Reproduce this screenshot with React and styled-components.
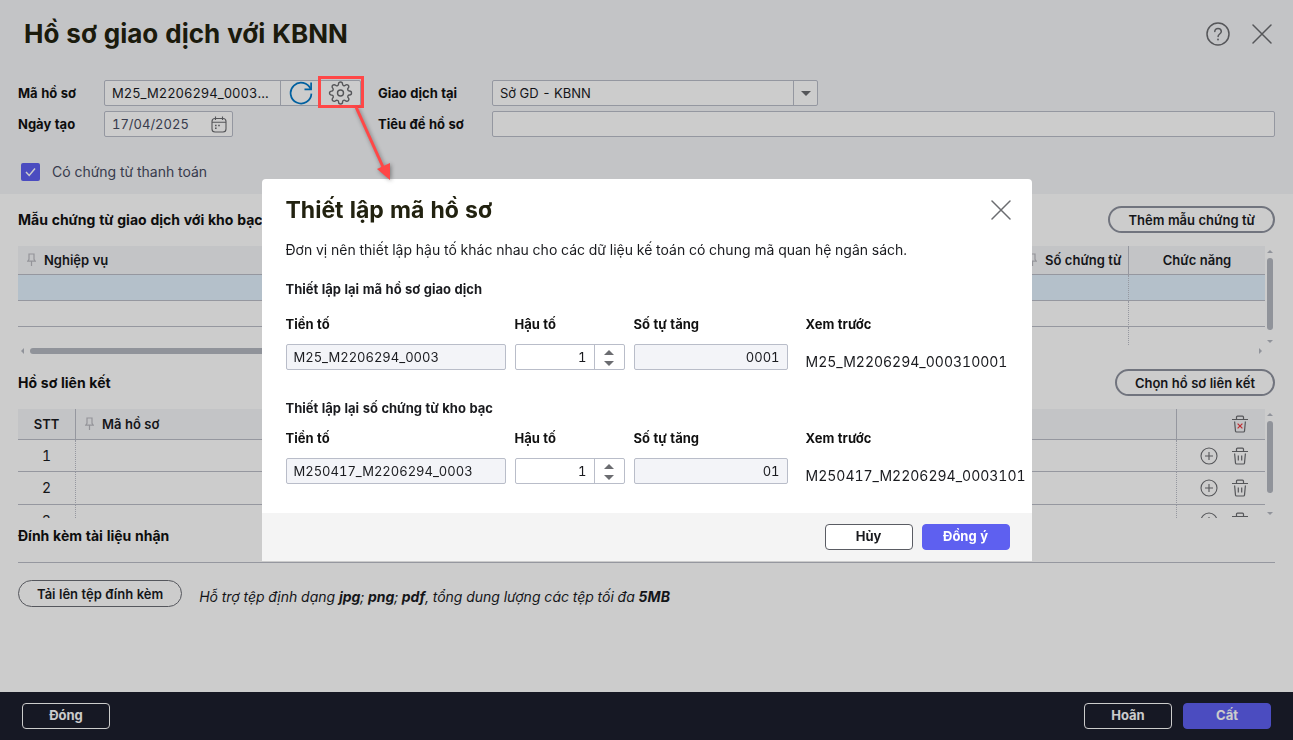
import React from 'react'
import styled, { createGlobalStyle, css } from 'styled-components'
import { FiSettings } from 'react-icons/fi'

// theme-----------------------------------

const colors = {
  primary: '#5e60f0',
  text: '#1a1b1f',
  muted: '#474b61',
  border: '#b9bdc9',
  line: '#bbbdc7',
  panel: '#f4f5f8',
  selected: '#e1f1fd',
  thumb: '#b5b8c1',
  icon: '#6b6c70',
  footer: '#1c1e2d',
  callout: '#ff4747'
}

const GlobalStyle = createGlobalStyle`
  * {
    box-sizing: border-box;
  }

  body {
    margin: 0;
    color: ${colors.text};
    font-family: Inter, "Liberation Sans", sans-serif;
    font-size: 14px;
    line-height: 20px;
    font-variant-numeric: tabular-nums;
  }

  button, input, select {
    margin: 0;
    color: inherit;
    font: inherit;
    font-size: 13px;
    font-variant-numeric: tabular-nums;
  }

  h1, h2, h3, p {
    margin: 0;
  }
`

// icons-----------------------------------

const CloseIcon = () => <svg width='20' height='20' viewBox='0 0 20 20' fill='none' stroke='currentColor' strokeWidth='1.5' strokeLinecap='round'>
  <path d='M1 1l18 18M19 1L1 19' />
</svg>

const HelpIcon = () => <svg width='24' height='24' viewBox='0 0 24 24' fill='none' stroke='currentColor' strokeWidth='1.5' strokeLinecap='round'>
  <circle cx='12' cy='12' r='11' />
  <path d='M8.8 9.6C8.8 7.6 10.2 6.4 12 6.4s3.3 1.2 3.3 3.1c0 2.6-3.2 2.4-3.2 4.9' />
  <path d='M12 17.4v.1' strokeWidth='1.8' />
</svg>

const RefreshIcon = () => <svg width='24' height='24' viewBox='0 0 24 24' fill='none' stroke='#0078c8' strokeWidth='1.7'>
  <path d='M21.7 8.3A10.4 10.4 0 1 0 22.4 12.6' />
  <path d='M22.1 1.6v6.8h-6.6' />
</svg>

const CalendarIcon = () => <svg width='16' height='17' viewBox='0 0 16 17' fill='none' stroke='currentColor' strokeWidth='1.1'>
  <rect x='1' y='2.5' width='14' height='13.5' rx='3' />
  <path d='M1 6.2h14M4.5 .5v3.5M11.5 .5v3.5' />
  <path d='M4 9.5h1.6M7.2 9.5h1.6M4 12.3h1.6' strokeWidth='1.4' />
</svg>

const CheckIcon = () => <svg width='19' height='18' viewBox='0 0 19 18' fill='none' stroke='#fff' strokeWidth='1.5'>
  <path d='M5 9l3.2 3.4L14 5.6' />
</svg>

const PinIcon = () => <svg width='9' height='14' viewBox='0 0 9 14' fill='none' stroke='#b9bac0' strokeWidth='1.2'>
  <path d='M2 1h5v5.4l1.2 1.8H.8L2 6.4zM4.5 8.2V13' />
</svg>

const PlusIcon = () => <svg width='18' height='18' viewBox='0 0 18 18' fill='none' stroke='currentColor' strokeWidth='1.1'>
  <circle cx='9' cy='9' r='8' />
  <path d='M9 5v8M5 9h8' />
</svg>

const TrashIcon = ({ crossed }) => <svg width='16' height='18' viewBox='0 0 16 18' fill='none' stroke='currentColor' strokeWidth='1.2'>
  <path d='M0 4.5h16M4.5 4.5V2.2c0-.6.4-1 1-1h5c.6 0 1 .4 1 1v2.3M2.6 6.5l.9 9.6c.1.6.4.9 1 .9h7c.6 0 .9-.3 1-.9l.9-9.6' />
  {crossed
    ? <path d='M5.6 8.6l4.8 4.8M10.4 8.6l-4.8 4.8' stroke='#f0393f' />
    : <path d='M6.3 8.5v5M9.7 8.5v5' />}
</svg>

// styled----------------------------------

const Page = styled.div`
  display: flex;
  flex-direction: column;
  min-height: 100vh;
  background: #fff;
`

const TopPanel = styled.header`
  padding-bottom: 12px;
  background: ${colors.panel};
`

const TitleBar = styled.div`
  display: flex;
  align-items: center;
  justify-content: space-between;
  height: 68px;
  padding: 0 21px 0 24px;
`

const PageTitle = styled.h1`
  color: #222210;
  font-size: 26px;
  font-weight: 700;
  line-height: 32px;
`

const TitleActions = styled.div`
  display: flex;
  align-items: center;
  gap: 22px;
`

const IconButton = styled.button`
  display: flex;
  align-items: center;
  justify-content: center;
  padding: ${p => p.$pad || 0}px;
  border: 0;
  background: none;
  color: ${colors.icon};
  cursor: pointer;
`

const FormGrid = styled.div`
  display: grid;
  grid-template-columns: 86px 274px 114px 1fr;
  row-gap: 5px;
  align-items: center;
  padding: 12px 18px 0;
`

const Label = styled.label`
  color: #111;
  font-size: 13px;
  font-weight: 700;
`

const boxStyle = css`
  height: 26px;
  border: 1px solid ${colors.border};
  border-radius: 2px;
  background: #fff;
`

const Group = styled.div`
  ${boxStyle}
  display: flex;
  align-items: stretch;
  width: ${p => p.$width ? `${p.$width}px` : 'auto'};
`

const GroupInput = styled.input`
  flex: 1;
  min-width: 0;
  padding: 0 7px;
  border: 0;
  background: none;
  color: ${p => p.$muted ? colors.muted : 'inherit'};
  text-align: ${p => p.$right ? 'right' : 'left'};
  text-overflow: ellipsis;
`

const GroupButton = styled.button`
  display: flex;
  flex-direction: column;
  align-items: center;
  justify-content: center;
  width: 40px;
  padding: 0;
  border: 0;
  border-left: ${p => p.$divided ? `1px solid ${colors.border}` : 0};
  background: none;
  color: ${colors.icon};
`

const GearAnchor = styled.div`
  position: relative;
  display: flex;

  svg {
    stroke-width: 1.4px;
  }
`

const Callout = styled.div`
  position: absolute;
  z-index: 2;
  top: -5px;
  left: -2px;
  width: 46px;
  height: 32px;
  border: 3px solid ${colors.callout};
  pointer-events: none;
`

const CalloutArrow = styled.svg`
  position: absolute;
  top: 28px;
  left: 30px;
  filter: drop-shadow(1px 1px 2px rgba(0, 0, 0, 0.4));
`

const TextInput = styled.input`
  ${boxStyle}
  width: 100%;
  padding: 0 7px;
  text-align: ${p => p.$right ? 'right' : 'left'};

  &:read-only {
    background: #f3f4f8;
  }
`

const SelectBox = styled.div`
  ${boxStyle}
  display: grid;
  grid-template-columns: 1fr 24px;
  width: 326px;
`

const Select = styled.select`
  grid-area: 1 / 1 / 2 / 3;
  appearance: none;
  padding: 0 30px 0 7px;
  border: 0;
  background: none;
`

const SelectArrow = styled.span`
  grid-area: 1 / 2;
  display: flex;
  align-items: center;
  justify-content: center;
  border-left: 1px solid ${colors.border};
  pointer-events: none;
`

const Triangle = styled.i`
  border: ${p => p.$size || 5}px solid transparent;
  ${p => p.$dir === 'up' && css`border-top: 0; border-bottom-color: ${p.$color || colors.icon};`}
  ${p => p.$dir === 'down' && css`border-bottom: 0; border-top-color: ${p.$color || colors.icon};`}
  ${p => p.$dir === 'left' && css`border-left: 0; border-right-color: ${p.$color || colors.icon};`}
  ${p => p.$dir === 'right' && css`border-right: 0; border-left-color: ${p.$color || colors.icon};`}
`

const CheckLabel = styled.label`
  display: flex;
  align-items: center;
  gap: 12px;
  width: max-content;
  margin: 25px 0 0 21px;
  color: ${colors.muted};
`

const CheckBox = styled.span`
  display: grid;

  > * {
    grid-area: 1 / 1;
  }

  svg {
    pointer-events: none;
  }
`

const CheckInput = styled.input`
  appearance: none;
  width: 19px;
  height: 18px;
  border-radius: 2px;
  background: ${colors.primary};
`

const Main = styled.main`
  flex: 1;
  padding: 12px 18px 0;
`

const SectionHead = styled.div`
  display: flex;
  align-items: center;
  justify-content: space-between;
  height: 27px;
  margin-top: ${p => p.$top || 0}px;
`

const SectionTitle = styled.h2`
  color: #111;
  font-size: 14px;
  font-weight: 700;
  line-height: 20px;
`

const PillButton = styled.button`
  height: 27px;
  padding: 0 18px;
  border: ${p => p.$thin ? '1px solid #6b6d75' : '2px solid #8e929e'};
  border-radius: 14px;
  background: #fff;
  font-size: 13px;
  font-weight: 600;
`

const TableArea = styled.div`
  display: grid;
  grid-template-columns: 1fr 10px;
  margin-top: ${p => p.$top}px;
`

const TableClip = styled.div`
  height: ${p => p.$height}px;
  overflow: hidden;
`

const Table = styled.table`
  width: 100%;
  table-layout: fixed;
  border-collapse: separate;
  border-spacing: 0;
`

const Col = styled.col`
  width: ${p => p.$width ? `${p.$width}px` : 'auto'};
`

const Th = styled.th`
  height: ${p => p.$height}px;
  padding: 0 0 0 ${p => p.$center ? 0 : 9}px;
  overflow: hidden;
  border-bottom: 1px solid ${colors.line};
  border-right: ${p => p.$divided ? `1px solid ${colors.line}` : 0};
  background: ${colors.panel};
  font-size: 13px;
  font-weight: 600;
  text-align: ${p => p.$center ? 'center' : 'left'};
  white-space: nowrap;
`

const HeadCell = styled.div`
  display: flex;
  align-items: center;
  gap: 8px;

  svg {
    flex: none;
  }
`

const Td = styled.td`
  height: ${p => p.$height}px;
  padding: 0;
  border-bottom: 1px solid ${colors.line};
  border-right: ${p => p.$divided ? `1px dotted ${colors.line}` : 0};
  background: ${p => p.$selected ? colors.selected : '#fff'};
  text-align: center;
`

const RowActions = styled.div`
  display: flex;
  justify-content: flex-end;
  gap: 14px;
  padding-right: 17px;
`

const VScroll = styled.div`
  display: flex;
  flex-direction: column;
  align-items: center;
  justify-content: space-between;
  padding: 4px 0 3px;
`

const HScroll = styled.div`
  display: flex;
  align-items: center;
  justify-content: space-between;
  height: 10px;
  padding: 0 3px;
`

const Thumb = styled.span`
  width: ${p => p.$across ? '68%' : '6px'};
  height: ${p => p.$across ? '6px' : '72px'};
  margin: ${p => p.$across ? '0 auto 0 6px' : '5px 0 auto'};
  border-radius: 3px;
  background: ${colors.thumb};
`

const AttachTitle = styled(SectionTitle)`
  padding: 8px 0 16px;
  border-bottom: 1px solid ${colors.line};
`

const AttachRow = styled.div`
  display: flex;
  align-items: center;
  gap: 17px;
  padding-top: 17px;
`

const Hint = styled.p`
  padding-top: 6px;
  font-style: italic;
`

const Footer = styled.footer`
  display: flex;
  align-items: center;
  gap: 11px;
  height: 48px;
  padding: 0 22px;
  background: ${colors.footer};
`

const Spacer = styled.span`
  flex: 1;
`

const Button = styled.button`
  width: 88px;
  height: 26px;
  padding: 0 0 2px;
  border: 1px solid #5a5c63;
  border-radius: 4px;
  background: #fff;
  font-size: 13px;
  font-weight: 700;

  ${p => p.$dark && css`
    border-color: #fff;
    background: none;
    color: #fff;
  `}

  ${p => p.$primary && css`
    border-color: ${colors.primary};
    background: ${colors.primary};
    color: #fff;
  `}
`

const Overlay = styled.div`
  position: fixed;
  z-index: 1;
  inset: 0;
  display: flex;
  align-items: center;
  justify-content: center;
  background: rgba(0, 0, 0, 0.2);
`

const Modal = styled.div`
  width: 770px;
  overflow: hidden;
  border-radius: 4px 4px 0 0;
  background: #fff;
`

const ModalBody = styled.div`
  padding: 15px 0 29px 24px;
`

const ModalHead = styled.div`
  display: flex;
  align-items: center;
  justify-content: space-between;
  height: 32px;
  padding-right: 21px;
`

const ModalTitle = styled.h2`
  color: #222210;
  font-size: 23px;
  font-weight: 700;
  line-height: 32px;
`

const ModalText = styled.p`
  margin-top: 14px;
`

const GroupTitle = styled.h3`
  margin-top: ${p => p.$top}px;
  font-size: 13px;
  font-weight: 700;
  line-height: 20px;
`

const Fields = styled.div`
  display: grid;
  grid-template-columns: 220px 110px 154px 1fr;
  column-gap: 9px;
  margin-top: ${p => p.$top}px;
`

const Field = styled.div`
  display: flex;
  flex-direction: column;
  gap: 10px;
  padding-left: ${p => p.$indent ? 9 : 0}px;
`

const Preview = styled.output`
  height: 26px;
  padding-top: 8px;
  white-space: nowrap;
`

const Stepper = styled.div`
  display: flex;
  flex-direction: column;
  align-items: center;
  justify-content: center;
  gap: 4px;
  width: 30px;
  padding-top: 2px;
  border-left: 1px solid ${colors.border};
`

const ModalFooter = styled.div`
  display: flex;
  align-items: center;
  justify-content: flex-end;
  gap: 9px;
  height: 48px;
  padding: 0 22px;
  background: #f4f4f4;
`

// component-------------------------------

const VerticalScroll = () => <VScroll>
  <Triangle $dir='up' $size={3} $color={colors.thumb} />
  <Thumb />
  <Triangle $dir='down' $size={3} $color={colors.thumb} />
</VScroll>

const CodeFields = ({ id, top, prefix, number, preview }) => <Fields $top={top}>
  <Field>
    <Label htmlFor={`${id}-prefix`}>Tiền tố</Label>
    <TextInput id={`${id}-prefix`} readOnly value={prefix} />
  </Field>
  <Field>
    <Label htmlFor={`${id}-suffix`}>Hậu tố</Label>
    <Group>
      <GroupInput id={`${id}-suffix`} $right defaultValue='1' />
      <Stepper>
        <IconButton type='button' aria-label='Tăng' $pad={1}><Triangle $dir='up' /></IconButton>
        <IconButton type='button' aria-label='Giảm' $pad={1}><Triangle $dir='down' /></IconButton>
      </Stepper>
    </Group>
  </Field>
  <Field>
    <Label htmlFor={`${id}-number`}>Số tự tăng</Label>
    <TextInput id={`${id}-number`} $right readOnly value={number} />
  </Field>
  <Field $indent>
    <Label htmlFor={`${id}-preview`}>Xem trước</Label>
    <Preview id={`${id}-preview`}>{preview}</Preview>
  </Field>
</Fields>

const SetupModal = () => <Overlay>
  <Modal role='dialog' aria-labelledby='modal-title'>
    <ModalBody>
      <ModalHead>
        <ModalTitle id='modal-title'>Thiết lập mã hồ sơ</ModalTitle>
        <IconButton type='button' aria-label='Đóng'><CloseIcon /></IconButton>
      </ModalHead>
      <ModalText>Đơn vị nên thiết lập hậu tố khác nhau cho các dữ liệu kế toán có chung mã quan hệ ngân sách.</ModalText>
      <GroupTitle $top={19}>Thiết lập lại mã hồ sơ giao dịch</GroupTitle>
      <CodeFields id='record' top={15} prefix='M25_M2206294_0003' number='0001' preview='M25_M2206294_000310001' />
      <GroupTitle $top={28}>Thiết lập lại số chứng từ kho bạc</GroupTitle>
      <CodeFields id='voucher' top={10} prefix='M250417_M2206294_0003' number='01' preview='M250417_M2206294_0003101' />
    </ModalBody>
    <ModalFooter>
      <Button type='button'>Hủy</Button>
      <Button type='button' $primary>Đồng ý</Button>
    </ModalFooter>
  </Modal>
</Overlay>

const VoucherTable = () => <TableArea $top={13}>
  <TableClip $height={100}>
    <Table>
      <colgroup>
        <Col />
        <Col $width={110} />
        <Col $width={136} />
      </colgroup>
      <thead>
        <tr>
          <Th $height={29}><HeadCell><PinIcon />Nghiệp vụ</HeadCell></Th>
          <Th $height={29} $divided><HeadCell><PinIcon />Số chứng từ</HeadCell></Th>
          <Th $height={29} $center>Chức năng</Th>
        </tr>
      </thead>
      <tbody>
        {[true, false, false].map((selected, i) => <tr key={i}>
          <Td $height={26} $selected={selected} />
          <Td $height={26} $selected={selected} $divided />
          <Td $height={26} $selected={selected} />
        </tr>)}
      </tbody>
    </Table>
  </TableClip>
  <VerticalScroll />
  <HScroll>
    <Triangle $dir='left' $size={3} $color={colors.thumb} />
    <Thumb $across />
    <Triangle $dir='right' $size={3} $color={colors.thumb} />
  </HScroll>
</TableArea>

const LinkedTable = () => <TableArea $top={13}>
  <TableClip $height={109}>
    <Table>
      <colgroup>
        <Col $width={58} />
        <Col />
        <Col $width={88} />
      </colgroup>
      <thead>
        <tr>
          <Th $height={31} $center $divided>STT</Th>
          <Th $height={31} $divided><HeadCell><PinIcon />Mã hồ sơ</HeadCell></Th>
          <Th $height={31} aria-label='Chức năng'>
            <RowActions>
              <IconButton type='button' aria-label='Xóa tất cả'><TrashIcon crossed /></IconButton>
            </RowActions>
          </Th>
        </tr>
      </thead>
      <tbody>
        {[1, 2, 3].map(n => {
          const height = n === 1 ? 32 : 33
          return <tr key={n}>
            <Td $height={height} $divided>{n}</Td>
            <Td $height={height} $divided />
            <Td $height={height}>
              <RowActions>
                <IconButton type='button' aria-label='Thêm'><PlusIcon /></IconButton>
                <IconButton type='button' aria-label='Xóa'><TrashIcon /></IconButton>
              </RowActions>
            </Td>
          </tr>
        })}
      </tbody>
    </Table>
  </TableClip>
  <VerticalScroll />
</TableArea>

const App = () => <>
  <GlobalStyle />
  <Page>
    <TopPanel>
      <TitleBar>
        <PageTitle>Hồ sơ giao dịch với KBNN</PageTitle>
        <TitleActions>
          <IconButton type='button' aria-label='Trợ giúp'><HelpIcon /></IconButton>
          <IconButton type='button' aria-label='Đóng'><CloseIcon /></IconButton>
        </TitleActions>
      </TitleBar>
      <FormGrid>
        <Label htmlFor='code'>Mã hồ sơ</Label>
        <Group $width={257}>
          <GroupInput id='code' defaultValue='M25_M2206294_000310001' />
          <GroupButton type='button' aria-label='Làm mới' $divided><RefreshIcon /></GroupButton>
          <GearAnchor>
            <GroupButton type='button' aria-label='Thiết lập'><FiSettings size={25} /></GroupButton>
            <Callout>
              <CalloutArrow width='44' height='80' viewBox='0 0 44 80'>
                <path d='M5 0L32 60' stroke={colors.callout} strokeWidth='3' />
                <path d='M39 73L26 62L39 56z' fill={colors.callout} />
              </CalloutArrow>
            </Callout>
          </GearAnchor>
        </Group>
        <Label htmlFor='place'>Giao dịch tại</Label>
        <SelectBox>
          <Select id='place'><option>Sở GD - KBNN</option></Select>
          <SelectArrow><Triangle $dir='down' /></SelectArrow>
        </SelectBox>
        <Label htmlFor='date'>Ngày tạo</Label>
        <Group $width={129}>
          <GroupInput id='date' $muted defaultValue='17/04/2025' />
          <IconButton type='button' aria-label='Chọn ngày' $pad={5}><CalendarIcon /></IconButton>
        </Group>
        <Label htmlFor='subject'>Tiêu đề hồ sơ</Label>
        <TextInput id='subject' />
      </FormGrid>
      <CheckLabel>
        <CheckBox>
          <CheckInput type='checkbox' defaultChecked />
          <CheckIcon />
        </CheckBox>
        Có chứng từ thanh toán
      </CheckLabel>
    </TopPanel>
    <Main>
      <SectionHead>
        <SectionTitle>Mẫu chứng từ giao dịch với kho bạc</SectionTitle>
        <PillButton type='button'>Thêm mẫu chứng từ</PillButton>
      </SectionHead>
      <VoucherTable />
      <SectionHead $top={13}>
        <SectionTitle>Hồ sơ liên kết</SectionTitle>
        <PillButton type='button'>Chọn hồ sơ liên kết</PillButton>
      </SectionHead>
      <LinkedTable />
      <AttachTitle>Đính kèm tài liệu nhận</AttachTitle>
      <AttachRow>
        <PillButton type='button' $thin>Tải lên tệp đính kèm</PillButton>
        <Hint>Hỗ trợ tệp định dạng <b>jpg</b>; <b>png</b>; <b>pdf</b>, tổng dung lượng các tệp tối đa <b>5MB</b></Hint>
      </AttachRow>
    </Main>
    <Footer>
      <Button type='button' $dark>Đóng</Button>
      <Spacer />
      <Button type='button' $dark>Hoãn</Button>
      <Button type='button' $primary>Cất</Button>
    </Footer>
  </Page>
  <SetupModal />
</>

export default App
